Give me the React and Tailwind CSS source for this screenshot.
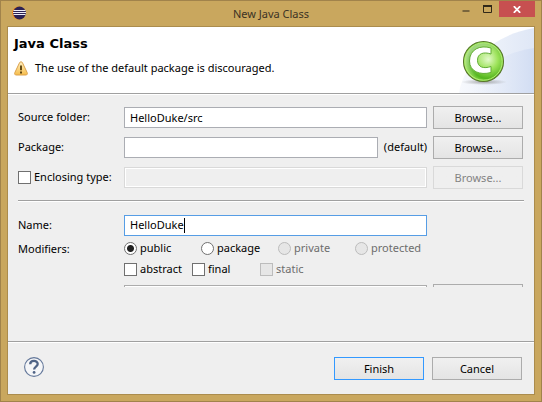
import React from "react";

const buttonBase =
  "h-[23px] w-[90px] border text-center text-[11px] leading-[21px] bg-linear-to-b from-[#f0f0f0] to-[#e4e4e4]";
const fieldBase = "h-[21px] w-full min-w-0 border px-[5px] text-[11px] leading-[19px] outline-none";

function BrowseButton({ disabled, label }) {
  return (
    <button
      type="button"
      disabled={disabled}
      aria-label={label}
      className={`${buttonBase} border-[#acacac] disabled:border-[#d9d9d9] disabled:from-[#efefef] disabled:to-[#efefef] disabled:text-[#838383]`}
    >
      Browse...
    </button>
  );
}

function Radio({ label, checked, disabled }) {
  return (
    <label className={`flex w-[77px] items-center gap-[3px] ${disabled ? "text-[#6d6d6d]" : ""}`}>
      <input
        type="radio"
        name="visibility"
        defaultChecked={checked}
        disabled={disabled}
        className="size-[13px] shrink-0 appearance-none rounded-full border border-[#707070] bg-white checked:bg-[radial-gradient(circle,#212121_3px,#ffffff_4px)] disabled:border-[#bcbcbc] disabled:bg-[#e6e6e6]"
      />
      {label}
    </label>
  );
}

function Check({ label, disabled }) {
  return (
    <label className={`flex items-center gap-[3px] whitespace-nowrap ${disabled ? "text-[#6d6d6d]" : ""}`}>
      <input
        type="checkbox"
        disabled={disabled}
        className="size-[13px] shrink-0 appearance-none border border-[#707070] bg-white disabled:border-[#bcbcbc] disabled:bg-[#e6e6e6]"
      />
      {label}
    </label>
  );
}

function Rule() {
  return <div className="h-[2px] shrink-0 border-t border-[#a0a0a0] bg-white" />;
}

function EclipseIcon() {
  return (
    <svg width="14" height="14" viewBox="0 0 14 14" aria-hidden="true">
      <circle cx="6.5" cy="7" r="6.5" fill="#f28b22" />
      <circle cx="7.5" cy="7" r="6.4" fill="#2c2255" />
      <path d="M1.5 4.5h12M1 6.5h13M1.5 8.500h12" stroke="#eeeef8" strokeWidth="1" />
    </svg>
  );
}

function WarningIcon() {
  return (
    <svg width="14" height="15" viewBox="0 0 14 15" aria-hidden="true">
      <defs>
        <linearGradient id="warn" x1="0" y1="0" x2="0" y2="1">
          <stop offset="0" stopColor="#fff0c4" />
          <stop offset="1" stopColor="#f6bd4a" />
        </linearGradient>
      </defs>
      <path d="M7 .8C7.700.8 8.200 1.200 8.500 1.800L13.200 11.700C13.700 12.900 13.200 14 11.900 14H2.100C.8 14 .3 12.900.8 11.700L5.500 1.800C5.800 1.200 6.300.8 7 .8Z" fill="url(#warn)" stroke="#dba14c" />
      <path d="M7 4.500v4.800" stroke="#5c4310" strokeWidth="1.900" />
      <rect x="6" y="10.500" width="2" height="2" fill="#5c4310" />
    </svg>
  );
}

function ClassBanner() {
  return (
    <svg width="76" height="66" viewBox="0 0 76 66" className="block shrink-0" aria-hidden="true">
      <defs>
        <linearGradient id="sweep" x1="0" y1="0" x2="1" y2="0">
          <stop offset="0" stopColor="#f7f9fd" />
          <stop offset="1" stopColor="#dfe7f6" />
        </linearGradient>
        <linearGradient id="sweep2" x1="0" y1="0" x2="1" y2="0">
          <stop offset="0" stopColor="#e9effa" stopOpacity="0" />
          <stop offset="1" stopColor="#d2ddf3" />
        </linearGradient>
        <radialGradient id="ball" cx=".62" cy=".45" r=".6">
          <stop offset="0" stopColor="#e2f9c8" />
          <stop offset=".4" stopColor="#9de35a" />
          <stop offset=".8" stopColor="#54b51e" />
          <stop offset="1" stopColor="#8ddb4b" />
        </radialGradient>
        <linearGradient id="gloss" x1="0" y1="0" x2="1" y2="1">
          <stop offset="0" stopColor="#ffffff" stopOpacity=".6" />
          <stop offset=".6" stopColor="#ffffff" stopOpacity="0" />
        </linearGradient>
        <radialGradient id="shade">
          <stop offset="0" stopColor="#777777" stopOpacity=".6" />
          <stop offset="1" stopColor="#777777" stopOpacity="0" />
        </radialGradient>
      </defs>
      <path d="M1 66C5 38 34 8 76 1v65Z" fill="url(#sweep)" />
      <path d="M14 66C20 42 40 27 76 21v45Z" fill="url(#sweep2)" />
      <ellipse cx="26" cy="55" rx="23" ry="3" fill="url(#shade)" />
      <circle cx="25.500" cy="34.500" r="20" fill="url(#ball)" stroke="#58762b" strokeWidth="1.100" />
      <circle cx="25.500" cy="34.500" r="18.700" fill="url(#gloss)" stroke="#b5ed76" strokeWidth="1" />
      <path
        d="M33 21V27C25.500 24.500 19.500 26.500 19.500 33.300C19.500 40.500 26 42 33 39.500V45.500C22 48.500 11.500 44.500 11.500 34C11.500 22.500 22 17.500 33 21Z"
        fill="#ffffff"
        stroke="#62ad35"
        strokeWidth="1"
      />
    </svg>
  );
}

function HelpIcon() {
  return (
    <svg width="20" height="20" viewBox="0 0 20 20" aria-hidden="true">
      <circle cx="10" cy="10" r="9.400" fill="#f5f6f8" stroke="#64789a" strokeWidth="1.100" />
      <path d="M6.200 7.200C6.200 2.900 13.700 2.900 13.700 7c0 2.600-3.600 2.700-3.600 5.600" fill="none" stroke="#506486" strokeWidth="2.300" />
      <circle cx="10.100" cy="15.400" r="1.400" fill="#506486" />
    </svg>
  );
}

export default function App() {
  return (
    <div className="flex min-h-screen flex-col border border-[#a1834b] bg-[#c9a75e] px-1.5 pb-1.5 font-['Noto_Sans','Open_Sans',sans-serif] text-[11px] text-black">
      <header className="grid h-[25px] shrink-0 grid-cols-[1fr_auto_1fr] items-start">
        <div className="pt-[5px] pl-[5px]">
          <EclipseIcon />
        </div>
        <h1 className="pt-1 text-[11px] leading-[18px] text-[#3b3224]">New Java Class</h1>
        <div className="flex justify-end">
          <button type="button" aria-label="Minimize" className="flex h-4 w-[18px] items-center justify-center">
            <svg width="8" height="8" aria-hidden="true"><path d="M.5 6h7" stroke="#79653c" strokeWidth="2" /></svg>
          </button>
          <button type="button" aria-label="Maximize" className="flex h-4 w-6 items-center justify-center">
            <svg width="9" height="8" aria-hidden="true"><path d="M.5 1v6.500h8V1" fill="none" stroke="#302819" /><path d="M0 1h9" stroke="#302819" strokeWidth="2" /></svg>
          </button>
          <button type="button" aria-label="Close" className="flex h-4 w-9 items-center justify-center bg-[#c75050]">
            <svg width="8" height="7" aria-hidden="true"><path d="M.8.2 7.200 6.800M7.200.2.800 6.800" stroke="#ffffff" strokeWidth="1.800" /></svg>
          </button>
        </div>
      </header>

      <main className="flex flex-1 flex-col border border-[#ab8c4d] bg-[#efefef]">
        <section className="flex h-[66px] shrink-0 justify-between bg-white">
          <div className="pt-[9px] pl-1.5">
            <h2 className="font-['DejaVu_Sans',sans-serif] text-[13px] leading-4 font-bold">Java Class</h2>
            <p className="flex items-center gap-[7px] pt-2 leading-4 whitespace-nowrap">
              <WarningIcon />
              The use of the default package is discouraged.
            </p>
          </div>
          <ClassBanner />
        </section>
        <Rule />

        <form className="flex flex-1 flex-col px-2.5 pt-[11px]">
          <div className="grid grid-cols-[100px_1fr_90px] items-center gap-x-1.5 gap-y-[7px] pr-px">
            <label htmlFor="source">Source folder:</label>
            <input id="source" defaultValue="HelloDuke/src" className={`${fieldBase} border-[#abadb3] bg-white`} />
            <BrowseButton label="Browse source folder" />

            <label htmlFor="package">Package:</label>
            <div className="flex items-center gap-1.5">
              <input id="package" className={`${fieldBase} border-[#abadb3] bg-white`} />
              <span>(default)</span>
            </div>
            <BrowseButton label="Browse package" />

            <Check label="Enclosing type:" />
            <input aria-label="Enclosing type" disabled className={`${fieldBase} border-[#d9d9d9] bg-[#efefef] ring-1 ring-white ring-inset`} />
            <BrowseButton disabled label="Browse enclosing type" />
          </div>

          <div className="pt-[11px] pb-[13px]">
            <Rule />
          </div>

          <div className="grid grid-cols-[100px_1fr_90px] items-center gap-x-1.5 pr-px">
            <label htmlFor="name">Name:</label>
            <div className="flex h-[21px] items-center border border-[#569de5] bg-white pl-[5px]">
              <input id="name" defaultValue="HelloDuke" className="field-sizing-content h-[15px] border-r border-black text-[11px] outline-none" />
            </div>
          </div>

          <fieldset className="grid grid-cols-[100px_1fr] gap-x-1.5 pt-1">
            <span className="leading-[17px]">Modifiers:</span>
            <div className="flex h-[17px] items-center">
              <Radio label="public" checked />
              <Radio label="package" />
              <Radio label="private" disabled />
              <Radio label="protected" disabled />
            </div>
            <div className="col-start-2 mt-1 grid h-[17px] grid-cols-[68px_68px_68px] items-center">
              <Check label="abstract" />
              <Check label="final" />
              <Check label="static" disabled />
            </div>
          </fieldset>

          <div className="mt-1.5 grid h-[3px] grid-cols-[100px_1fr_90px] gap-x-1.5 overflow-hidden pr-px">
            <input aria-label="Superclass" className="col-start-2 mt-px h-[21px] w-full border border-[#acacac] bg-white" />
            <button type="button" aria-label="Browse superclass" className="h-[23px] border border-[#acacac] bg-[#efefef]" />
          </div>
        </form>

        <Rule />
        <footer className="flex h-[51px] shrink-0 items-start justify-between pt-3.5 pr-3 pl-4">
          <button type="button" aria-label="Help">
            <HelpIcon />
          </button>
          <div className="flex gap-2">
            <button type="button" className={`${buttonBase} border-[#3399ff]`}>Finish</button>
            <button type="button" className={`${buttonBase} border-[#acacac]`}>Cancel</button>
          </div>
        </footer>
      </main>
    </div>
  );
}
